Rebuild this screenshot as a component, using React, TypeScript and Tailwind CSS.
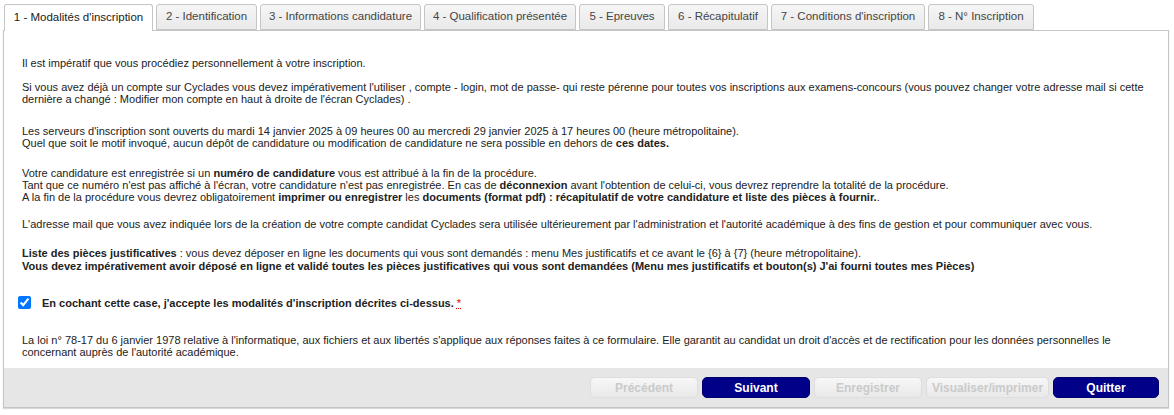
import React from "react";

const tabs: { label: string; w: string }[] = [
  { label: "1 - Modalités d'inscription", w: "w-[149px]" },
  { label: "2 - Identification", w: "w-[101px]" },
  { label: "3 - Informations candidature", w: "w-[161px]" },
  { label: "4 - Qualification présentée", w: "w-[152px]" },
  { label: "5 - Epreuves", w: "w-[86px]" },
  { label: "6 - Récapitulatif", w: "w-[100px]" },
  { label: "7 - Conditions d'inscription", w: "w-[154px]" },
  { label: "8 - N° Inscription", w: "w-[106px]" },
];

function Btn({ label, active, w }: { label: string; active?: boolean; w: string }) {
  return active ? (
    <button
      className={`${w} h-[21px] rounded-[5px] border border-[#00006a] bg-[#000088] text-white text-[12px] font-bold leading-none`}
    >
      {label}
    </button>
  ) : (
    <button
      disabled
      className={`${w} h-[21px] rounded-[5px] border border-[#dedede] bg-gradient-to-b from-[#f7f7f7] to-[#e9e9e9] text-[#cacaca] text-[12px] font-bold leading-none`}
    >
      {label}
    </button>
  );
}

export default function App() {
  return (
    <div
      className="w-[1174px] h-[415px] bg-white text-[#222] pt-[4px] pl-[3px]"
      style={{ fontFamily: "'Liberation Sans', Arial, sans-serif" }}
    >
      <div className="w-[1166px]">
        <div className="flex gap-[3px] pl-[1px] relative z-10">
          {tabs.map((t, i) =>
            i === 0 ? (
              <div
                key={t.label}
                className={`${t.w} h-[27px] border border-b-0 border-[#c5c5c5] rounded-t-[3px] bg-white text-[11.5px] text-[#212121] flex items-center justify-center pb-[1px]`}
              >
                {t.label}
              </div>
            ) : (
              <div
                key={t.label}
                className={`${t.w} h-[26px] border border-[#c5c5c5] rounded-t-[3px] bg-gradient-to-b from-[#f6f6f6] to-[#e9e9e9] text-[11.5px] text-[#454545] flex items-center justify-center`}
              >
                {t.label}
              </div>
            )
          )}
        </div>
        <div className="border border-[#c5c5c5] -mt-[1px] h-[378px] flex flex-col shadow-[0_1px_1px_rgba(0,0,0,0.15)]">
          <div className="flex-1 px-[18px] text-[11px] leading-[12px]">
            <p className="mt-[26px]">Il est impératif que vous procédiez personnellement à votre inscription.</p>
            <p className="mt-[12px]">
              Si vous avez déjà un compte sur Cyclades vous devez impérativement l'utiliser , compte - login, mot de passe- qui reste pérenne pour toutes vos inscriptions aux examens-concours (vous pouvez changer votre adresse mail si cette dernière a changé : Modifier mon compte en haut à droite de l'écran Cyclades) .
            </p>
            <p className="mt-[20px]">
              Les serveurs d'inscription sont ouverts du mardi 14 janvier 2025 à 09 heures 00 au mercredi 29 janvier 2025 à 17 heures 00 (heure métropolitaine).
              <br />
              Quel que soit le motif invoqué, aucun dépôt de candidature ou modification de candidature ne sera possible en dehors de <b>ces dates.</b>
            </p>
            <p className="mt-[18px]">
              Votre candidature est enregistrée si un <b>numéro de candidature</b> vous est attribué à la fin de la procédure.
              <br />
              Tant que ce numéro n'est pas affiché à l'écran, votre candidature n'est pas enregistrée. En cas de <b>déconnexion</b> avant l'obtention de celui-ci, vous devrez reprendre la totalité de la procédure.
              <br />
              A la fin de la procédure vous devrez obligatoirement <b>imprimer ou enregistrer</b> les <b>documents (format pdf) : récapitulatif de votre candidature et liste des pièces à fournir.</b>.
            </p>
            <p className="mt-[15px]">
              L'adresse mail que vous avez indiquée lors de la création de votre compte candidat Cyclades sera utilisée ultérieurement par l'administration et l'autorité académique à des fins de gestion et pour communiquer avec vous.
            </p>
            <p className="mt-[17px] leading-[13px]">
              <b>Liste des pièces justificatives</b> : vous devez déposer en ligne les documents qui vous sont demandés : menu Mes justificatifs et ce avant le {"{6}"} à {"{7}"} (heure métropolitaine).
              <br />
              <b>Vous devez impérativement avoir déposé en ligne et validé toutes les pièces justificatives qui vous sont demandées (Menu mes justificatifs et bouton(s) J'ai fourni toutes mes Pièces)</b>
            </p>
            <div className="mt-[23px] flex items-center -ml-[4px]">
              <input type="checkbox" defaultChecked className="w-[13px] h-[13px] m-0 accent-[#0075ff]" />
              <label className="ml-[11px] font-bold">
                En cochant cette case, j'accepte les modalités d'inscription décrites ci-dessus.{" "}
                <span className="text-[#d00] font-normal underline decoration-dotted">*</span>
              </label>
            </div>
            <p className="mt-[25px]">
              La loi n° 78-17 du 6 janvier 1978 relative à l'informatique, aux fichiers et aux libertés s'applique aux réponses faites à ce formulaire. Elle garantit au candidat un droit d'accès et de rectification pour les données personnelles le concernant auprès de l'autorité académique.
            </p>
          </div>
          <div className="h-[39px] bg-[#e6e6e6] flex items-center justify-end gap-[4px] pr-[9px]">
            <Btn label="Précédent" w="w-[108px]" />
            <Btn label="Suivant" active w="w-[108px]" />
            <Btn label="Enregistrer" w="w-[108px]" />
            <Btn label="Visualiser/imprimer" w="w-[123px]" />
            <Btn label="Quitter" active w="w-[106px]" />
          </div>
        </div>
      </div>
    </div>
  );
}
